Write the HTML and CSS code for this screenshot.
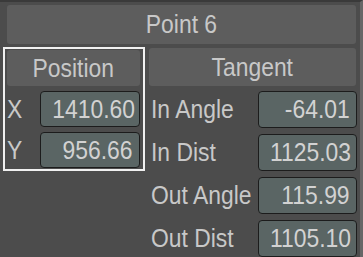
FILE: index.html
```html
<!DOCTYPE html>
<html lang="en">
<head>
    <meta charset="UTF-8">
    <meta name="viewport" content="width=device-width, initial-scale=1.0">
    <title>Point 6</title>
    <link rel="stylesheet" href="styles.css">
</head>
<body>
    <div class="panel">
        <div class="title"><span class="txt">Point 6</span></div>

        <div class="columns">
            <div class="group selected">
                <div class="group-head"><span class="txt">Position</span></div>
                <div class="row">
                    <span class="lbl"><span class="txt">X</span></span>
                    <span class="field"><span class="txt">1410.60</span></span>
                </div>
                <div class="row">
                    <span class="lbl"><span class="txt">Y</span></span>
                    <span class="field"><span class="txt">956.66</span></span>
                </div>
            </div>

            <div class="group tangent">
                <div class="group-head"><span class="txt">Tangent</span></div>
                <div class="row">
                    <span class="lbl"><span class="txt">In Angle</span></span>
                    <span class="field"><span class="txt">-64.01</span></span>
                </div>
                <div class="row">
                    <span class="lbl"><span class="txt">In Dist</span></span>
                    <span class="field"><span class="txt">1125.03</span></span>
                </div>
                <div class="row">
                    <span class="lbl"><span class="txt">Out Angle</span></span>
                    <span class="field"><span class="txt">115.99</span></span>
                </div>
                <div class="row">
                    <span class="lbl"><span class="txt">Out Dist</span></span>
                    <span class="field"><span class="txt">1105.10</span></span>
                </div>
            </div>
        </div>
    </div>
</body>
</html>
```

FILE: styles.css
```css
body {
    margin: 0;
    padding: 0;
    height: 255px;
    overflow: hidden;
    background-color: #4c4c4c;
    border-top: 2px solid #3a3a3a;
    border-right: 3px solid #666;
    font-family: "Liberation Sans", Arial, sans-serif;
    font-size: 26px;
    color: #c8c8c8;
}
/* the UI font is a narrow one, squeeze the glyphs a bit */
.txt {
    display: inline-block;
    transform: scaleX(0.88);
    transform-origin: center;
    white-space: nowrap;
}
.panel {
    padding: 3px 4px 0 3px;
}
.title {
    margin-left: 4px;
    height: 39px;
    line-height: 39px;
    text-align: center;
    background: #5d5d5d;
    border-radius: 3px;
}
.columns {
    margin-top: 3px;
    display: grid;
    grid-template-columns: 142px minmax(0, 1fr);
    column-gap: 4px;
    align-items: start;
}
.group-head {
    background: #5d5d5d;
    border-radius: 3px;
    text-align: center;
    height: 36px;
    line-height: 36px;
}
.row {
    display: flex;
    align-items: center;
    margin-top: 5px;
}
.lbl {
    flex: 1;
    min-width: 0;
    width: 0;
}
.lbl .txt {
    transform-origin: left center;
}
.field {
    flex-shrink: 0;
    box-sizing: border-box;
    height: 37px;
    line-height: 35px;
    text-align: right;
    padding-right: 6px;
    background: #5a6564;
    border: 1px solid #1c1c1c;
    border-radius: 4px;
    color: #d2d2d2;
    overflow: visible;
    white-space: nowrap;
}
.field .txt {
    transform-origin: right center;
}
.selected {
    border: 2px solid #f0f0f0;
    padding: 1px 3px 1px 2px;
}
.selected .field {
    width: 100px;
    height: 36px;
}
.tangent {
    padding-top: 1px;
}
.tangent .group-head {
    height: 38px;
    line-height: 38px;
}
.tangent .lbl {
    padding-left: 2px;
}
.tangent .row + .row {
    margin-top: 6px;
}
.tangent .field {
    width: 99px;
    margin-right: -1px;
}
```
